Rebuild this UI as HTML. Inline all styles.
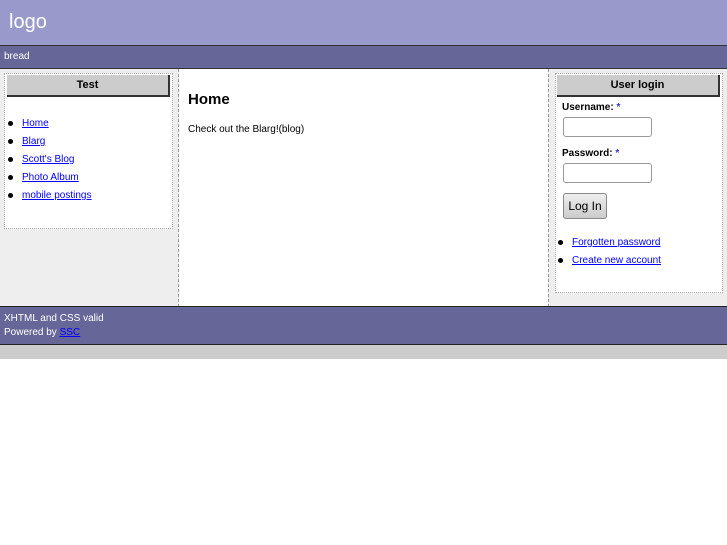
<!DOCTYPE html>
<html><head><style>
*{margin:0;padding:0;box-sizing:border-box}
body{width:727px;height:545px;background:#fff;font-family:"Liberation Sans",sans-serif;font-size:10px;color:#000;position:relative;overflow:hidden}
.abs{position:absolute}
a{color:#00f;text-decoration:underline}
.hd{background:#ccc;border-right:2px solid #333;border-bottom:2px solid #333;font-weight:bold;font-size:11px;text-align:center;line-height:20px}
.box{border:1px dotted #aaa;background:#fff}
ul{list-style:disc}
li{position:absolute;left:22px;white-space:nowrap;line-height:12px}
li:before{content:"";position:absolute;left:-14px;top:3px;width:5px;height:5px;border-radius:50%;background:#000}
.inp{position:absolute;width:89px;height:20px;border:1px solid #999;border-radius:3px;background:#fff}
</style></head><body>
<div class="abs" style="left:0;top:0;width:727px;height:45px;background:#9999cc"></div>
<div class="abs" style="left:9px;top:11px;font-size:20px;color:#fff">logo</div>
<div class="abs" style="left:0;top:45px;width:727px;height:24px;background:#666699;border-top:1px solid #333;border-bottom:1px solid #333"></div>
<div class="abs" style="left:4px;top:51px;color:#fff;font-size:10px">bread</div>
<div class="abs" style="left:0;top:69px;width:179px;height:238px;background:#eee;border-right:1px dashed #999"></div>
<div class="abs" style="left:548px;top:69px;width:179px;height:238px;background:#eee;border-left:1px dashed #999"></div>
<div class="abs box" style="left:4px;top:73px;width:169px;height:156px"></div>
<div class="abs hd" style="left:7px;top:75px;width:163px;height:22px">Test</div>
<ul>
<li style="top:118px"><a>Home</a></li>
<li style="top:136px"><a>Blarg</a></li>
<li style="top:154px"><a>Scott's Blog</a></li>
<li style="top:172px"><a>Photo Album</a></li>
<li style="top:190px"><a>mobile postings</a></li>
</ul>
<div class="abs" style="left:188px;top:91px;font-size:15px;font-weight:bold">Home</div>
<div class="abs" style="left:188px;top:124px">Check out the Blarg!(blog)</div>
<div class="abs box" style="left:555px;top:73px;width:168px;height:220px"></div>
<div class="abs hd" style="left:557px;top:75px;width:163px;height:22px">User login</div>
<div class="abs" style="left:562px;top:102px;font-weight:bold">Username: <span style="color:#33c">*</span></div>
<div class="inp" style="left:563px;top:117px"></div>
<div class="abs" style="left:562px;top:148px;font-weight:bold">Password: <span style="color:#33c">*</span></div>
<div class="inp" style="left:563px;top:163px"></div>
<div class="abs" style="left:563px;top:193px;width:44px;height:26px;border:1px solid #888;border-radius:3px;background:linear-gradient(#eee,#ccc);font-size:12px;line-height:25px;text-align:center">Log In</div>
<ul>
<li style="top:237px;left:572px"><a>Forgotten password</a></li>
<li style="top:255px;left:572px"><a>Create new account</a></li>
</ul>
<div class="abs" style="left:0;top:306px;width:727px;height:39px;background:#666699;border-top:1px solid #222;border-bottom:1px solid #222"></div>
<div class="abs" style="left:4px;top:313px;color:#fff">XHTML and CSS valid</div>
<div class="abs" style="left:4px;top:327px;color:#fff">Powered by <a style="color:#00f">SSC</a></div>
<div class="abs" style="left:0;top:345px;width:727px;height:14px;background:#ccc"></div>
</body></html>
